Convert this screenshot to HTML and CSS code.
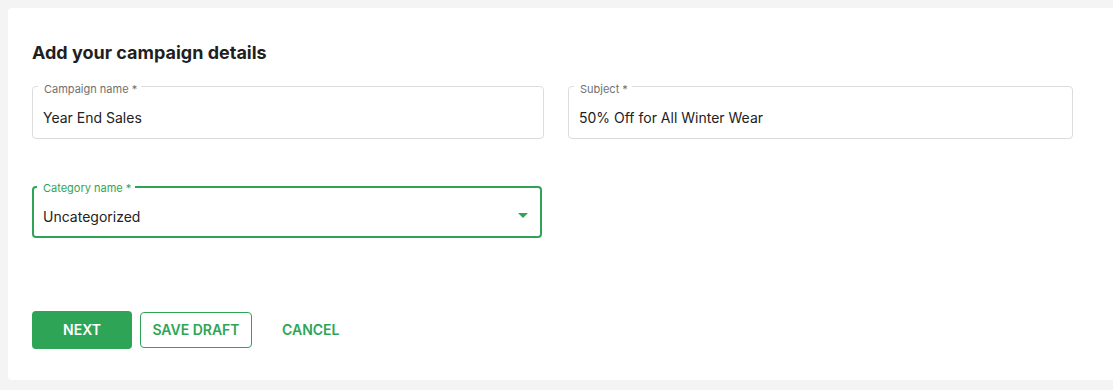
FILE: index.html
```html
<!DOCTYPE html>
<html lang="en">
<head>
<meta charset="utf-8">
<title>Add your campaign details</title>
<link rel="stylesheet" href="styles.css">
</head>
<body>
<main class="card">
  <h1 class="title">Add your campaign details</h1>
  <div class="row">
    <div class="field">
      <span class="label">Campaign name *</span>
      <div class="value">Year End Sales</div>
    </div>
    <div class="field">
      <span class="label">Subject *</span>
      <div class="value">50% Off for All Winter Wear</div>
    </div>
  </div>
  <div class="row row--single">
    <div class="field field--focused">
      <span class="label">Category name *</span>
      <div class="select">
        <div class="value">Uncategorized</div>
        <svg class="arrow" width="24" height="24" viewBox="0 0 24 24" aria-hidden="true"><path d="M7 10l5 5 5-5z"/></svg>
      </div>
    </div>
  </div>
  <div class="actions">
    <button class="btn btn--primary" type="button">NEXT</button>
    <button class="btn btn--outline" type="button">SAVE DRAFT</button>
    <button class="btn btn--text" type="button">CANCEL</button>
  </div>
</main>
</body>
</html>
```
FILE: styles.css
```css
html, body {
  margin: 0;
  padding: 0;
}
body {
  background: #f4f4f4;
  font-family: Inter, "Noto Sans", "Liberation Sans", sans-serif;
  color: #222222;
  overflow: hidden;
  height: 390px;
}
.card {
  box-sizing: border-box;
  margin: 8px 0 0 8px;
  width: 1130px;
  background: #ffffff;
  border-radius: 4px;
  padding: 33px 24px 31px 24px;
}
.title {
  margin: 0;
  font-size: 18px;
  line-height: 24px;
  font-weight: 700;
  color: #1f1f1f;
}
.row {
  display: grid;
  grid-template-columns: 512px 505px;
  column-gap: 24px;
  margin-top: 21px;
}
.row--single {
  margin-top: 47px;
  grid-template-columns: 510px;
}
.field {
  position: relative;
  box-sizing: border-box;
  height: 53px;
  border: 1px solid #dcdcdc;
  border-radius: 4px;
  padding: 21px 10px 0 10px;
}
.label {
  position: absolute;
  top: -4px;
  left: 5px;
  padding: 0 4px 0 6px;
  background: #ffffff;
  font-size: 11px;
  line-height: 12px;
  color: #707070;
  white-space: nowrap;
}
.value {
  font-size: 14px;
  line-height: 20px;
  color: #222222;
  white-space: nowrap;
}
.field--focused {
  height: 52px;
  border: 2px solid #2ea556;
  padding: 19px 5px 0 9px;
}
.field--focused .label {
  top: -6px;
  left: 3px;
  color: #2ea556;
}
.select {
  display: flex;
  align-items: flex-start;
}
.select .value {
  flex: 1;
}
.arrow {
  display: block;
  margin-top: -4px;
  fill: #2ea556;
}
.actions {
  display: flex;
  align-items: center;
  gap: 8px;
  margin-top: 73px;
}
.btn {
  box-sizing: border-box;
  font-family: Inter, "Noto Sans", "Liberation Sans", sans-serif;
  font-size: 14px;
  font-weight: 600;
  line-height: 20px;
  border-radius: 4px;
  cursor: pointer;
  margin: 0;
}
.btn--primary {
  width: 100px;
  height: 38px;
  background: #2ea556;
  color: #ffffff;
  border: none;
}
.btn--outline {
  width: 112px;
  height: 36px;
  background: #ffffff;
  color: #2ea556;
  border: 1px solid #2ea556;
  padding: 0;
}
.btn--text {
  height: 36px;
  background: transparent;
  border: none;
  color: #2ea556;
  padding: 0 22px;
}
```
